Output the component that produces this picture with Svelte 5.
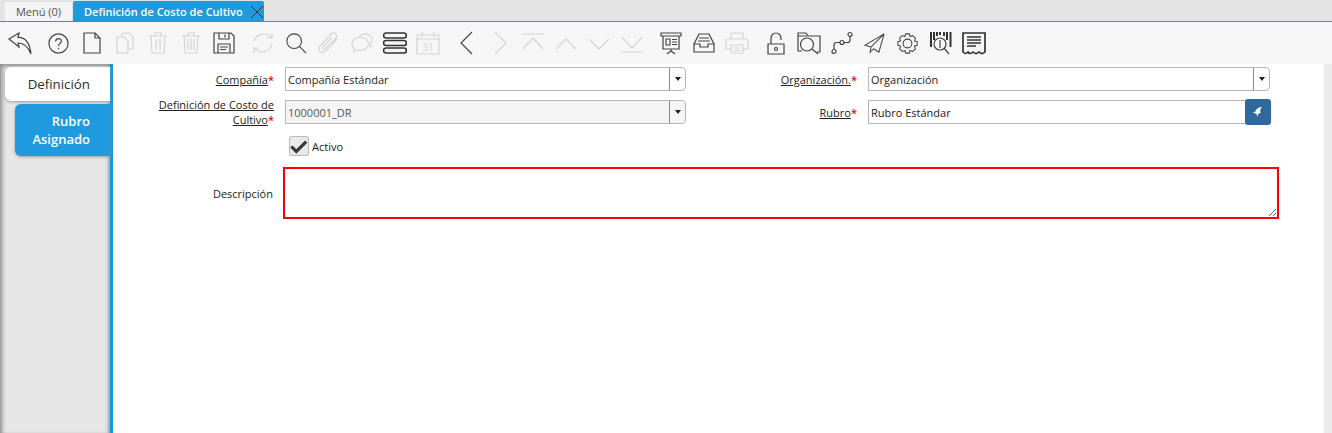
<script>
  // toolbar icons, stroke paths on a 24 box; off = greyed out, gap = extra space before the icon
  const tools = [
    { name: "Deshacer", d: "M1 8l10-6-1 4.500C17 6 22 12 23 23 20 15 16 12 10 12l1 4z" },
    { name: "Ayuda", gap: 6, size: 23, d: "M12 2a10 10 0 1 0 0 20 10 10 0 0 0 0-20zM9 10c0-4 6-4 6-.500 0 2.500-3 2.500-3 5M12 16.500v1.500" },
    { name: "Nuevo", d: "M4 2h11l5 5v15H4zM15 2v5h5" },
    { name: "Copiar", off: true, d: "M9 6V2h7l4 4v12h-5M4 6h7l4 4v12H4z" },
    { name: "Eliminar", off: true, d: "M3 5h18M9 5V2h6v3M5 5l1 17h12l1-17M10 8v11M14 8v11" },
    { name: "Eliminar seleccion", off: true, d: "M3 5h18M9 5V2h6v3M5 5l1 17h12l1-17M9 8v11M12 8v11M15 8v11" },
    { name: "Guardar", d: "M2 2h17l3 3v17H2zM7 2v6h10V2M13 3.500v3M6 22v-9h12v9M8 16h8M8 18.500h6" },
    { name: "Refrescar", gap: 6, off: true, d: "M3 11C4 3 15 0 20 7M21 2v5h-5M21 13c-1 8-12 11-17 4M3 22v-5h5" },
    { name: "Buscar", size: 22, d: "M10 2a8 8 0 1 0 0 16 8 8 0 0 0 0-16zM16 16l7 7" },
    { name: "Adjunto", off: true, d: "M20 8L9 20c-5 4-9-1-6-5L14 3c3-3 7 1 5 4L8 18c-2 1-3-1-2-2l9-10" },
    { name: "Chat", off: true, size: 22, d: "M10 6C5 6 1 9 1 13c0 2 1 4 3 5l-1 4 4-2.500c1 .5 2 .5 3 .5 5 0 9-3.500 9-7.500S15 6 10 6zM9 6c1-2 4-4 7-4 4 0 7 3 7 6.500 0 2-1 3.500-2 4.500l1 3-3-1" },
    { name: "Detalle", heavy: true, d: "M3 2h18a2 2 0 0 1 0 5H3a2 2 0 0 1 0-5zM3 9.500h18a2 2 0 0 1 0 5H3a2 2 0 0 1 0-5zM3 17h18a2 2 0 0 1 0 5H3a2 2 0 0 1 0-5z" },
    { name: "Calendario", off: true, cal: true, d: "M1 4h22v19H1zM1 8h22M6 1v5M18 1v5" },
    { name: "Anterior", gap: 6, d: "M17 1L6 12l11 11" },
    { name: "Siguiente", off: true, d: "M7 1l11 11L7 23" },
    { name: "Primero", off: true, d: "M1 3h22M2 18L12 7l10 11" },
    { name: "Arriba", off: true, d: "M2 18L12 8l10 10" },
    { name: "Abajo", off: true, d: "M2 8l10 10L22 8" },
    { name: "Ultimo", off: true, d: "M2 6l10 11L22 6M1 21h22" },
    { name: "Informe", gap: 6, d: "M2 2h20v3H2zM4 5v13h16V5M7 8h4v6H7zM13 8.500h5M13 11h5M13 13.500h5M12 18v2M12 20l-4 3M12 20l4 3" },
    { name: "Buzon", d: "M7 3h10l5 10v8H2v-8zM2 13h6v3h8v-3h6M7 7h10M6 10h12" },
    { name: "Imprimir", off: true, d: "M6 8V2h12v6M3 8h18a2 2 0 0 1 2 2v8h-5M6 18H1v-8a2 2 0 0 1 2-2M6 14h12v8H6zM9 17h6M9 19.500h6" },
    { name: "Bloquear", gap: 6, d: "M7 13V7a5 5 0 0 1 10 0v2M4 13h16v10H4zM12 16.500a1.500 1.500 0 1 0 0 3 1.500 1.500 0 0 0 0-3z" },
    { name: "Zoom", d: "M1 19V2h8l2 3h12v16h-3M1 5h9M10 7a6.500 6.500 0 1 0 0 13 6.500 6.500 0 0 0 0-13zM15 18l6 5M1 19v1h4" },
    { name: "Flujo", d: "M4 18.500a2 2 0 1 0 0 4 2 2 0 0 0 0-4zM12 9.500a2 2 0 1 0 0 4 2 2 0 0 0 0-4zM20 1.500a2 2 0 1 0 0 4 2 2 0 0 0 0-4zM4 18.500V14a2.500 2.500 0 0 1 2.500-2.500H10M14 11.500h3.500A2.500 2.500 0 0 0 20 9V5.500" },
    { name: "Enviar", size: 21, d: "M23 1L1 14l7 2zM23 1L8 16l-1 6 4-4M23 1l-6 21-6-4" },
    { name: "Ajustes", size: 21, d: "M10 1h4l1 3 3-1 3 3-1 3 3 1v4l-3 1 1 3-3 3-3-1-1 3h-4l-1-3-3 1-3-3 1-3-3-1v-4l3-1-1-3 3-3 3 1zM12 7a5 5 0 1 0 0 10 5 5 0 0 0 0-10z" },
    { name: "Codigo", bars: "M2 1v15M5 1v8M8 1v4M11 1v3M15 1v4M18 1v8M21.500 1v15", d: "M11 7a6 6 0 1 0 0 12 6 6 0 0 0 0-12zM11 9v8M15 17l5 6" },
    { name: "Recibo", heavy: true, d: "M1 2h22v19c-2 2-4 2-6 0-2 2-4 2-6 0-2 2-4 2-5 0-2 2-3 2-5 0zM5 6h14M5 9h14M5 12h14M5 15h9" }
  ];
</script>

<div class="tabs">
  <div class="tab">Menú (0)</div>
  <div class="tab current">
    Definición de Costo de Cultivo
    <svg class="close" width="14" height="14" viewBox="0 0 14 14"><path d="M1 1l12 12M13 1L1 13" /></svg>
  </div>
</div>

<div class="toolbar">
  {#each tools as t}
    <span class="tool" class:off={t.off} class:gap={t.gap} title={t.name}>
      <svg width={t.size ?? 24} height={t.size ?? 24} viewBox="0 0 24 24" class:heavy={t.heavy}>
        {#if t.bars}<path class="bars" d={t.bars} />{/if}
        <path d={t.d} />
        {#if t.cal}<text x="12" y="19.500" text-anchor="middle">31</text>{/if}
      </svg>
    </span>
  {/each}
</div>

<div class="main">
  <nav class="side">
    <div class="sidetab active">Definición</div>
    <div class="sidetab">Rubro Asignado</div>
  </nav>

  <form class="form">
    <div class="label"><u>Compañía</u><i>*</i></div>
    <div class="field combo"><span>Compañía Estándar</span><b><em></em></b></div>
    <div class="label"><u>Organización.</u><i>*</i></div>
    <div class="field combo"><span>Organización</span><b><em></em></b></div>

    <div class="label"><u>Definición de Costo de Cultivo</u><i>*</i></div>
    <div class="field combo readonly"><span>1000001_DR</span><b><em></em></b></div>
    <div class="label"><u>Rubro</u><i>*</i></div>
    <div class="field search">
      <span>Rubro Estándar</span>
      <button type="button" aria-label="Buscar rubro">
        <svg width="10" height="10" viewBox="0 0 10 10"><path d="M9 0C6 0 3 2 2.500 4.500L0 5.500l3.500 1.500L4.500 10C4.500 7.500 6 6 8 5.500 6.500 4.500 7 2 9 0z" /></svg>
      </button>
    </div>

    <label class="check">
      <span class="box">
        <svg width="18" height="15" viewBox="0 0 20 16"><path d="M1.500 8l5.500 5.500L18 2.500" /></svg>
      </span>
      Activo
    </label>

    <div class="label desc">Descripción</div>
    <textarea></textarea>
  </form>

  <div class="track"></div>
</div>

<style>
  :global(body) {
    margin: 0;
    background: #fff;
    font-family: "Open Sans", sans-serif;
    overflow: hidden;
  }

  .tabs {
    display: flex;
    height: 21px;
    background: #e4e4e4;
    border-bottom: 1px solid #1f9ade;
    padding-left: 5px;
    gap: 2px;
    font-size: 11px;
  }

  .tab {
    width: 67px;
    height: 19px;
    margin-top: 2px;
    line-height: 19px;
    text-align: center;
    background: #f4f4f4;
    color: #555;
  }

  .tab.current {
    width: auto;
    height: 21px;
    margin-top: 1px;
    margin-left: -1px;
    line-height: 21px;
    padding: 0 0 0 11px;
    display: flex;
    align-items: center;
    gap: 7px;
    background: #1f9ade;
    color: #fff;
    font-weight: 600;
    border-radius: 2px 2px 0 0;
  }

  .close {
    fill: none;
    stroke: #333;
    stroke-width: 1;
  }

  .toolbar {
    display: flex;
    align-items: center;
    height: 42px;
    padding-left: 3px;
    background: #f6f6f6;
  }

  .tool {
    display: flex;
    justify-content: center;
    width: 33px;
    flex: none;
  }

  .tool.gap {
    margin-left: 6px;
  }

  .tool svg {
    fill: none;
    stroke: #444;
    stroke-width: 1.2;
  }

  .tool svg.heavy {
    stroke: #333;
    stroke-width: 1.7;
  }

  .tool .bars {
    stroke: #333;
    stroke-width: 2;
  }

  .tool.off svg {
    stroke: #d4d4d4;
  }

  .tool text {
    font-size: 10px;
    fill: #d4d4d4;
    stroke: none;
  }

  .main {
    display: flex;
    height: 369px;
  }

  .side {
    width: 110px;
    flex: none;
    padding-top: 3px;
    background: #e6e6e6;
    border-right: 3px solid #0f9ae0;
    box-shadow: inset 3px 3px 4px -1px #8a8a8a, inset -3px 0 3px -1px #a5a5a5;
  }

  .sidetab {
    margin-left: 15px;
    height: 52px;
    box-sizing: border-box;
    padding: 8px 20px 0 15px;
    text-align: right;
    font-size: 13px;
    line-height: 18px;
    font-weight: 600;
    color: #fff;
    background: #1f9ade;
    border-radius: 6px 0 0 6px;
    box-shadow: 0 1px 3px #999;
  }

  .sidetab.active {
    margin: 0 0 3px 5px;
    height: 34px;
    padding: 8px 20px 0 0;
    font-weight: 400;
    font-size: 13.300px;
    color: #2c2c2c;
    background: #fff;
  }

  .form {
    flex: 1;
    display: grid;
    grid-template-columns: 172px 401px 182px 402px;
    grid-template-rows: 24px 24px 25px 52px;
    row-gap: 9px;
    align-content: start;
    padding-top: 3px;
    font-size: 11px;
    color: #222;
  }

  .track {
    width: 8px;
    flex: none;
    background: #ebebeb;
  }

  .label {
    align-self: center;
    padding-right: 11px;
    padding-left: 40px;
    text-align: right;
    line-height: 15px;
    color: #222;
  }

  .label i {
    color: #f00;
    font-style: normal;
    font-weight: 600;
    font-size: 11px;
    line-height: 10px;
  }

  .label.desc {
    grid-column: 1;
    padding-right: 12px;
  }

  .field {
    display: flex;
    align-items: center;
    box-sizing: border-box;
    height: 24px;
    border: 1px solid #b4b4b4;
    background: #fff;
    color: #222;
    padding-left: 2px;
  }

  .field span {
    flex: 1;
  }

  .combo {
    border-radius: 0 4px 4px 0;
  }

  .combo b {
    display: flex;
    align-items: center;
    justify-content: center;
    width: 15px;
    height: 100%;
    border-left: 1px solid #888;
  }

  .combo em {
    border: 3.500px solid transparent;
    border-top: 4px solid #222;
    border-bottom: 0;
  }

  .readonly {
    background: #f5f5f5;
    color: #555;
  }

  .search button {
    width: 26px;
    height: 26px;
    margin: -1px -2px -1px 0;
    padding: 0;
    display: flex;
    align-items: center;
    justify-content: center;
    border: 0;
    border-radius: 3px;
    background: #2f6a9e;
  }

  .search svg {
    fill: #fff;
  }

  .check {
    grid-column: 2 / 5;
    display: flex;
    align-items: center;
    gap: 3px;
    padding: 3px 0 2px 4px;
  }

  .box {
    display: flex;
    align-items: center;
    justify-content: center;
    box-sizing: border-box;
    width: 20px;
    height: 20px;
    border: 1px solid #bbb;
    border-radius: 2px;
    background: #e9e9e9;
  }

  .box svg {
    fill: none;
    stroke: #3a3a3a;
    stroke-width: 3.500;
  }

  textarea {
    grid-column: 2 / 5;
    box-sizing: border-box;
    width: 996px;
    height: 52px;
    margin: 0 0 0 -2px;
    border: 2px solid #f00;
    outline: 0;
    background: #fff;
  }
</style>
